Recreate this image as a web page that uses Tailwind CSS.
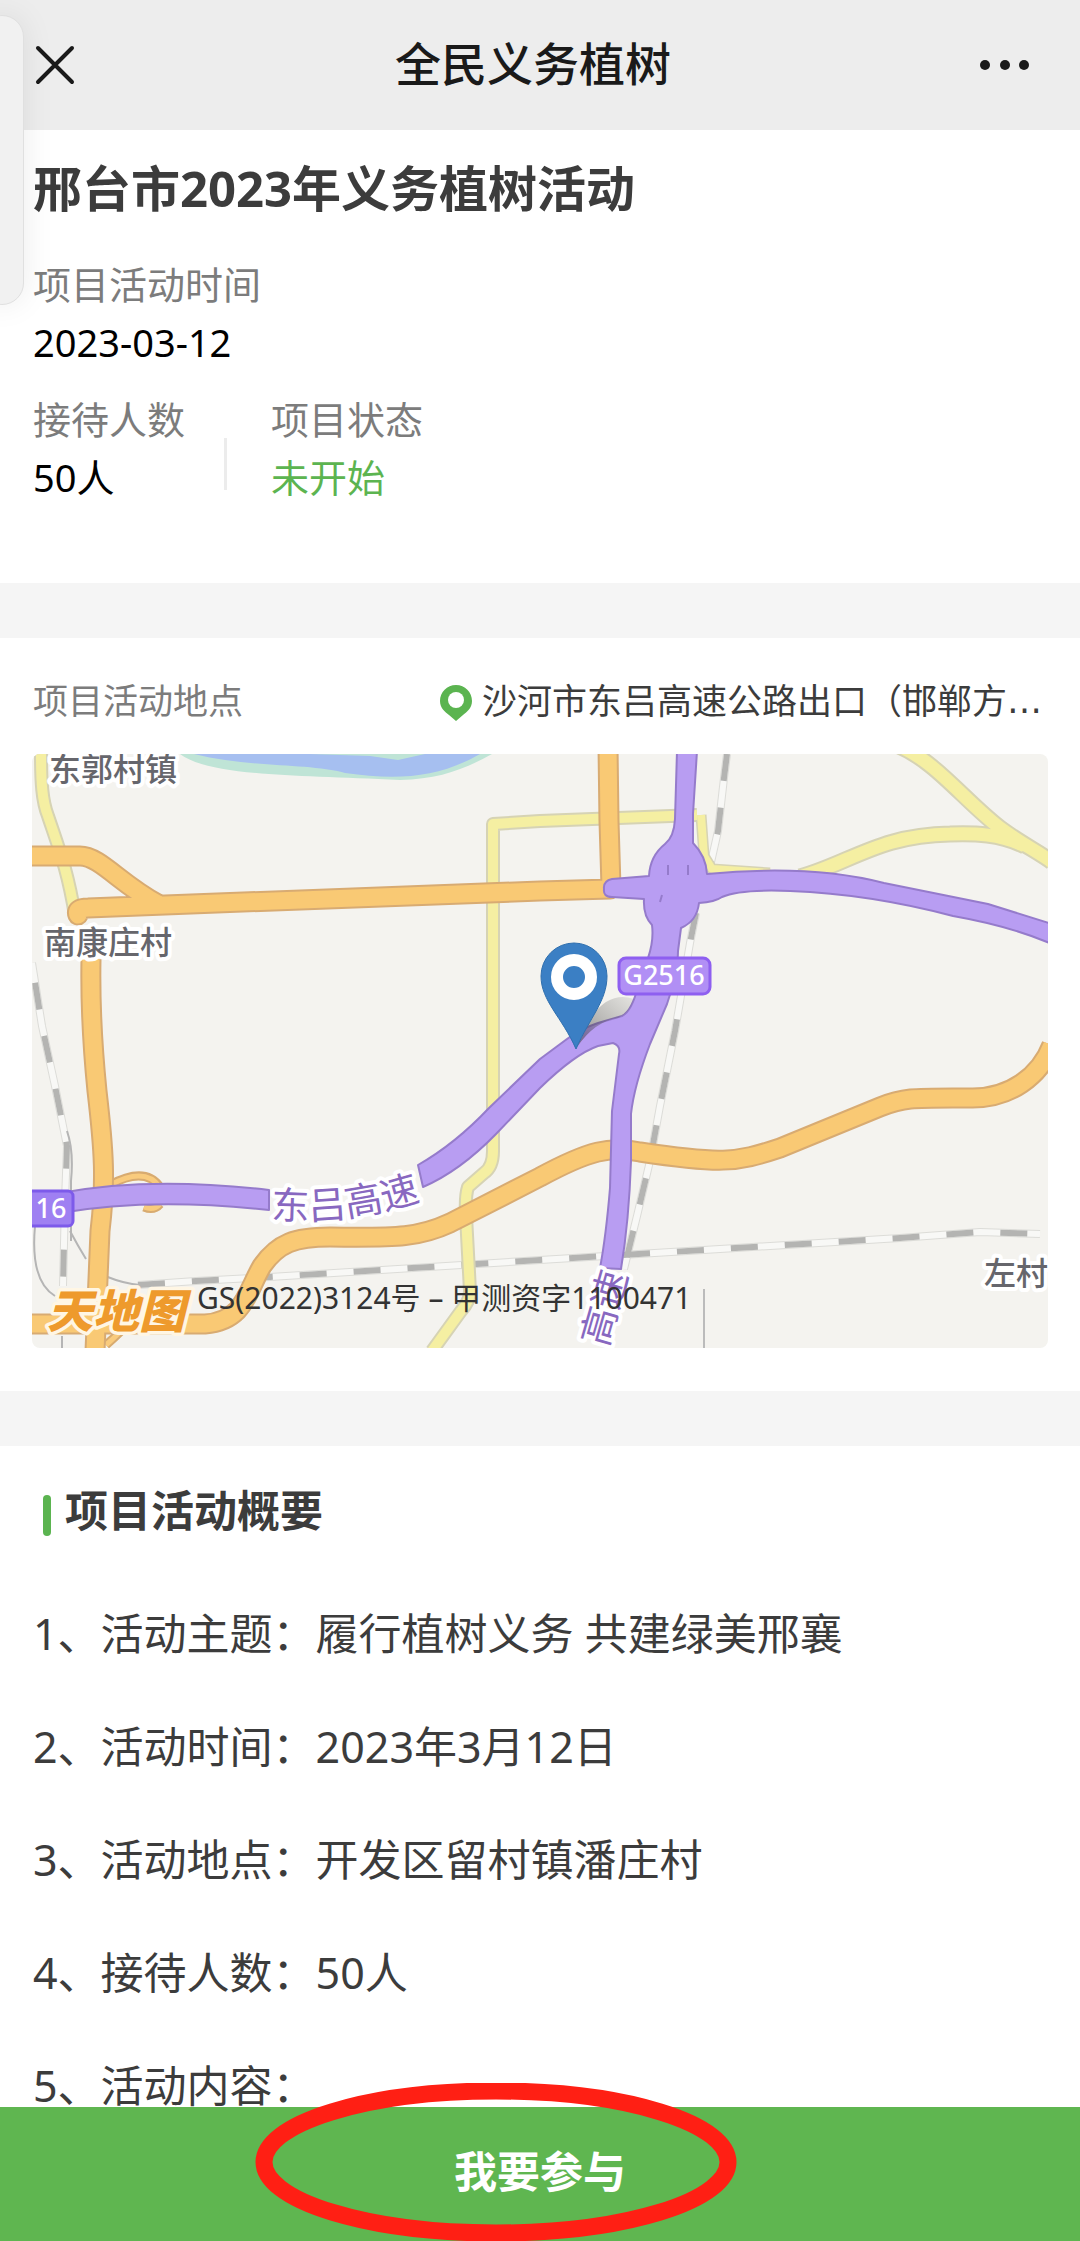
<!DOCTYPE html>
<html lang="zh-CN">

<head>
  <meta charset="UTF-8">
  <meta name="viewport" content="width=device-width, initial-scale=1.0">
  <title>全民义务植树</title>
  <script src="https://cdn.jsdelivr.net/npm/@tailwindcss/browser@4"></script>
</head>

<body class="min-h-screen overflow-x-hidden bg-white font-['Noto_Sans','Noto_Sans_CJK_SC',sans-serif] text-[#3c3c3c]">
  <!-- 顶部导航 -->
  <header class="grid h-[130px] grid-cols-[1fr_auto_1fr] items-center bg-[#ededed] pr-[46px] pl-8 text-[#1a1a1a]">
    <button type="button" aria-label="关闭" class="justify-self-start">
      <svg class="h-11 w-11" viewBox="0 0 44 44" fill="none" stroke="currentColor" stroke-width="4" stroke-linecap="round">
        <path d="M6 5l34 34M40 5L6 39" />
      </svg>
    </button>
    <p class="pb-1 text-[46px] leading-[60px] font-medium">全民义务植树</p>
    <button type="button" aria-label="更多" class="justify-self-end">
      <svg class="h-5 w-14" viewBox="0 0 56 20" fill="currentColor">
        <circle cx="7" cy="10" r="5" />
        <circle cx="27" cy="10" r="5" />
        <circle cx="46" cy="10" r="5" />
      </svg>
    </button>
  </header>

  <!-- 侧边手势条 -->
  <div class="absolute top-[15px] -left-5 h-[290px] w-11 rounded-[32px] border border-[#e0e0e0] bg-[#f1f1f1] shadow-[0_0_32px_rgba(0,0,0,0.08)]"></div>

  <main>
    <section class="px-[33px] pt-[26px] pb-[77px]">
      <h1 class="text-[49px] leading-[64px] font-bold">邢台市2023年义务植树活动</h1>
      <dl class="mt-[35px] text-[38px] leading-[58px]">
        <dt class="text-[#7c7c7c]">项目活动时间</dt>
        <dd class="text-black">2023-03-12</dd>
      </dl>
      <div class="mt-[19px] flex text-[38px] leading-[58px]">
        <dl>
          <dt class="text-[#7c7c7c]">接待人数</dt>
          <dd class="text-black">50人</dd>
        </dl>
        <div class="mr-11 mb-4 ml-[39px] h-[52px] w-[3px] self-end bg-[#ececec]"></div>
        <dl>
          <dt class="text-[#7c7c7c]">项目状态</dt>
          <dd class="text-[#5cb450]">未开始</dd>
        </dl>
      </div>
    </section>

    <section class="border-t-[55px] border-[#f5f5f5] px-8 pb-[43px]">
      <div class="flex items-center justify-between pt-[41px] pb-[31px] pl-px text-[35px] leading-[44px]">
        <h2 class="text-[#7c7c7c]">项目活动地点</h2>
        <p class="flex items-center pr-[6px]">
          <svg class="mt-1 mr-[10px] h-9 w-8" viewBox="0 0 32 36">
            <path d="M16 0C7 0 0 7 0 16c0 7 5 11 9 14l7 6 7-6c4-3 9-7 9-14C32 7 25 0 16 0Z" fill="#5bb450" />
            <circle cx="16" cy="15" r="8" fill="#fff" />
          </svg>
          沙河市东吕高速公路出口（邯郸方<span class="font-['DejaVu_Sans']">…</span>
        </p>
      </div>

      <!-- 地图 -->
      <svg class="block w-full rounded-lg" viewBox="32 753 1016 594" font-family="'Noto Sans', 'Noto Sans CJK SC', sans-serif">
        <defs>
          <linearGradient id="shade" x1="0" y1="1" x2="1" y2="0">
            <stop offset="0" stop-color="#333" stop-opacity=".55" />
            <stop offset="1" stop-color="#555" stop-opacity=".1" />
          </linearGradient>
          <path id="dlRoad" d="M271 1217Q355 1224 432 1195" />
          <path id="rail1" d="M727 753L724 777 718 830 709 870M696 912L690 942 675 1030 660 1105 650 1160 637 1215 624 1268" />
          <path id="rail2" d="M138 1284L196 1280 270 1276 540 1259 720 1248 900 1237 980 1231 1040 1233" />
          <path id="rail3" d="M32 962L42 1025 55 1085 67 1145 65 1200 63 1285" />
          <path id="y1" d="M41 753C41 780 42 800 48 815C58 845 68 870 75 915" />
          <path id="y2" d="M697 814L540 820 493 823V1150Q493 1166 484 1172L468 1186Q465 1195 466 1215L470 1290Q470 1300 461 1310L432 1350" />
          <path id="y3" d="M701 814L704 855 712 868 770 872" />
          <path id="y4" d="M899 745C935 760 965 800 1000 827C1020 842 1040 852 1052 861M800 876C850 862 880 834 950 833C975 832 1000 833 1025 845" />
          <path id="o1" d="M25 855H80C100 855 120 883 158 903M78 914Q75 907 88 907L165 904 540 890 610 888M608 745L609 820 611 886" />
          <path id="o2" d="M91 958C90 1010 93 1050 97 1090C104 1150 106 1180 100 1230L95 1350" />
          <path id="o3" d="M25 1323H205C245 1320 247 1290 262 1265C278 1242 295 1236 330 1236C400 1237 420 1236 450 1222L540 1176C590 1149 610 1145 640 1151C720 1163 735 1162 780 1147L880 1106C905 1096 915 1097 970 1097C1010 1098 1040 1075 1052 1044" />
        </defs>
        <rect x="32" y="753" width="1016" height="594" fill="#f4f3ef" />
        <path d="M180 753C210 775 290 774 400 779C440 778 465 768 492 753Z" fill="#bfe4d6" />
        <path d="M194 753C250 767 310 762 345 772C400 780 440 776 480 753H425L398 759 370 755 310 753Z" fill="#a6bff0" />

        <!-- 铁路 -->
        <g fill="none">
          <g stroke="#dcdcd8" stroke-width="8">
            <use href="#rail1" /><use href="#rail2" /><use href="#rail3" />
          </g>
          <g stroke="#f8f8f6" stroke-width="6">
            <use href="#rail1" /><use href="#rail2" /><use href="#rail3" />
          </g>
          <g stroke="#b4b4b2" stroke-width="6" stroke-dasharray="27 27">
            <use href="#rail1" /><use href="#rail2" /><use href="#rail3" stroke-dashoffset="-20" />
          </g>
          <path d="M67 1130Q74 1150 71 1180V1240M70 1230Q78 1245 86 1258M105 1275Q125 1283 140 1284M35 1225Q30 1280 55 1295M62 1335V1347" stroke="#b5b5b5" stroke-width="2" />
          <path d="M704 1288V1347" stroke="#bbb" stroke-width="2" />
        </g>

        <!-- 道路 -->
        <g fill="none" stroke-linejoin="round">
          <g stroke="#d6d3b4">
            <use href="#y1" stroke-width="14" /><use href="#y2" stroke-width="14" /><use href="#y3" stroke-width="11" /><use href="#y4" stroke-width="17" />
          </g>
          <g stroke="#f5efa2">
            <use href="#y1" stroke-width="10" /><use href="#y2" stroke-width="10" /><use href="#y3" stroke-width="8" /><use href="#y4" stroke-width="13" />
          </g>
          <path d="M110 1184Q145 1165 160 1186M144 1206Q154 1210 160 1203M106 1344Q122 1330 128 1322" stroke="#d8ab70" stroke-width="9" />
          <path d="M110 1184Q145 1165 160 1186M144 1206Q154 1210 160 1203M106 1344Q122 1330 128 1322" stroke="#f9cb7d" stroke-width="5" />
          <g stroke="#d8ab72" stroke-width="21">
            <use href="#o1" stroke-linecap="round" /><use href="#o2" /><use href="#o3" />
          </g>
          <g stroke="#f9c974" stroke-width="17">
            <use href="#o1" stroke-linecap="round" /><use href="#o2" /><use href="#o3" />
          </g>
        </g>

        <!-- 高速 -->
        <g fill="#b89df2" stroke="#957bcb" stroke-width="2" stroke-linejoin="round">
          <path d="M677 750L675 818Q674 836 665 843Q650 855 649 875L612 878Q603 880 604 888Q603 896 612 896L644 898Q643 915 652 924Q654 940 648 957L638 985Q632 1010 622 1015L598 1022Q580 1028 567 1038L540 1058 489 1107Q455 1143 418 1164L423 1186Q460 1170 496 1133L540 1087Q575 1053 598 1045L613 1042Q621 1045 619 1053L612 1110 610 1187Q606 1235 600 1267L621 1268Q629 1220 631 1160V1113Q634 1085 650 1043L667 1003Q678 970 678 950L681 927Q697 920 699 902Q715 901 722 896Q740 888 790 890Q870 893 953 915Q1010 925 1052 943V923L988 903 884 882Q810 863 707 873Q706 855 693 842V813L697 750Z" />
          <path d="M60 1192Q150 1175 269 1189V1209Q150 1196 60 1212Z" />
          <path d="M668 864V874M688 864V874M662 894L660 901" fill="none" />
        </g>

        <!-- 路牌 -->
        <g font-size="27" font-weight="500" fill="#fff" text-anchor="middle">
          <rect x="619" y="957" width="91" height="36" rx="7" fill="#b18ff5" stroke="#8e5ff0" stroke-width="3" />
          <text x="664" y="984">G2516</text>
          <rect x="20" y="1190" width="53" height="35" rx="5" fill="#9f80f2" stroke="#7d5aea" stroke-width="3" />
          <text x="51" y="1217">16</text>
        </g>

        <!-- 地名 -->
        <g font-size="32" font-weight="500" fill="#66666c" stroke="#fff" stroke-width="8" stroke-linejoin="round" paint-order="stroke">
          <text x="49" y="780">东郭村镇</text>
          <text x="44" y="953">南康庄村</text>
          <text x="984" y="1284">左村</text>
        </g>
        <g font-size="38" fill="#8868c0" stroke="#fff" stroke-width="8" stroke-linejoin="round" paint-order="stroke">
          <text><textPath href="#dlRoad">东吕高速</textPath></text>
          <text transform="translate(607 1347) rotate(-74)">高速</text>
        </g>

        <!-- 定位标记 -->
        <path d="M577 1046L592 1015Q610 990 634 998Q630 1012 618 1017Q595 1020 577 1046Z" fill="url(#shade)" />
        <path d="M576 1048C562 1016 541 1000 541 975A33 33 0 0 1 607 975C607 1000 590 1016 576 1048Z" fill="#3b7fc4" stroke="#2f6fae" stroke-width="1" />
        <circle cx="574" cy="976" r="17" fill="none" stroke="#fff" stroke-width="12" />

        <!-- 天地图标识与审图号 -->
        <text x="47" y="1327" font-size="46" font-weight="900" font-style="italic" fill="#ee9a2c" stroke="#fff6e4" stroke-width="7" stroke-linejoin="round" paint-order="stroke">天地图</text>
        <text x="197" y="1308" font-size="30" fill="#333">GS(2022)3124号 – 甲测资字1100471</text>
      </svg>
    </section>

    <section class="border-t-[55px] border-[#f5f5f5] px-[33px] text-[43px]">
      <h2 class="mt-[30px] mb-[31px] flex items-center gap-[14px] pl-[10px] leading-[70px] font-bold">
        <span class="mt-2 h-[41px] w-2 rounded-full bg-[#5bb450]"></span>项目活动概要
      </h2>
      <div class="leading-[113px]">
        <p>1、活动主题：履行植树义务 共建绿美邢襄</p>
        <p>2、活动时间：2023年3月12日</p>
        <p>3、活动地点：开发区留村镇潘庄村</p>
        <p>4、接待人数：50人</p>
        <p>5、活动内容：</p>
      </div>
    </section>
  </main>

  <!-- 底部按钮 -->
  <footer class="fixed inset-x-0 bottom-0">
    <button type="button" class="block h-[134px] w-full bg-[#5fb650] pb-1 text-[43px] font-bold text-white">我要参与</button>
    <svg class="pointer-events-none absolute bottom-0 left-1/2 -ml-[285px] h-[158px] w-[482px]" viewBox="0 0 482 158">
      <ellipse cx="241" cy="79" rx="232" ry="71" fill="none" stroke="#ff1f14" stroke-width="17" />
    </svg>
  </footer>
</body>

</html>
